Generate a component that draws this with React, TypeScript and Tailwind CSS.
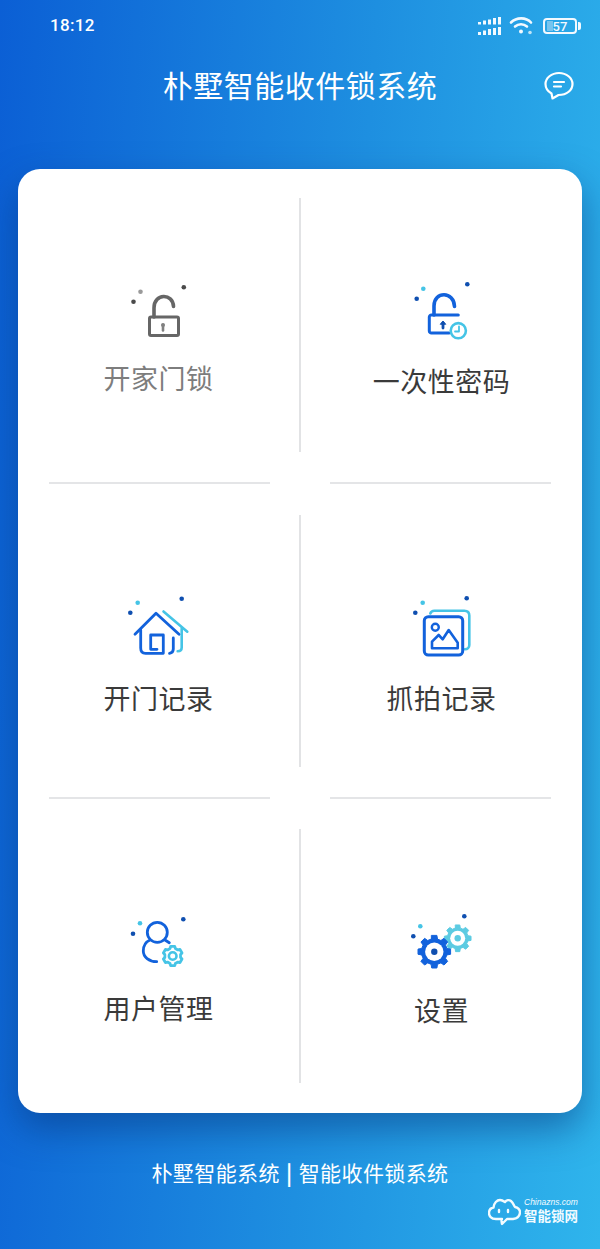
const CJK = "font-['Noto_Sans_CJK_SC','Noto_Sans',sans-serif]";
const BLUE = "#1262dc";
const DARK = "#0f4fb0";
const CYAN = "#45c4e6";

function gear(cx: number, cy: number, rOut: number, rIn: number, teeth: number) {
  const pts: string[] = [];
  const step = (Math.PI * 2) / teeth;
  for (let i = 0; i < teeth; i++) {
    const a = i * step - Math.PI / 2;
    const w = step * 0.2;
    const o = [a - w, a + w];
    const n = [a + step * 0.32, a + step * 0.68];
    o.forEach((t) => pts.push(`${(cx + rOut * Math.cos(t)).toFixed(2)},${(cy + rOut * Math.sin(t)).toFixed(2)}`));
    n.forEach((t) => pts.push(`${(cx + rIn * Math.cos(t)).toFixed(2)},${(cy + rIn * Math.sin(t)).toFixed(2)}`));
  }
  return pts.join(" ");
}

function Dots({ a, b, c, ca = DARK, cb = CYAN, cc = DARK }: { a: number[]; b: number[]; c: number[]; ca?: string; cb?: string; cc?: string }) {
  return (
    <>
      <circle cx={a[0]} cy={a[1]} r="2.3" fill={ca} />
      <circle cx={b[0]} cy={b[1]} r="2.3" fill={cb} />
      <circle cx={c[0]} cy={c[1]} r="2.3" fill={cc} />
    </>
  );
}

function Svg({ children }: { children: React.ReactNode }) {
  return (
    <svg width="80" height="70" viewBox="0 0 80 70" fill="none" strokeLinecap="round" strokeLinejoin="round" className="block shrink-0">
      {children}
    </svg>
  );
}

function LockGray() {
  return (
    <Svg>
      <Dots a={[14.5, 21.7]} b={[21.5, 11.7]} c={[64.8, 7.3]} ca="#4a4a4a" cb="#9a9a9a" cc="#4a4a4a" />
      <rect x="30.5" y="37" width="29" height="18.5" rx="1.5" stroke="#666" strokeWidth="3" />
      <path d="M35 37V28C35 13 54 13 54.5 26.5" stroke="#666" strokeWidth="3.6" />
      <circle cx="44" cy="45" r="2" fill="#808080" />
      <path d="M44 45V50.5" stroke="#808080" strokeWidth="2.6" />
    </Svg>
  );
}

function LockBlue() {
  return (
    <Svg>
      <Dots a={[14.7, 18.7]} b={[21.3, 8.7]} c={[65.3, 4.3]} />
      <path d="M47 53H29.5A2 2 0 0 1 27.3 51V37A2 2 0 0 1 29.5 35H56.3" stroke={BLUE} strokeWidth="3" />
      <path d="M32 35V26C32 11 52 11 52.5 26.5" stroke={BLUE} strokeWidth="3.6" />
      <path d="M41 43V48" stroke={DARK} strokeWidth="2.8" />
      <path d="M38.5 44L41 41L43.5 44Z" fill={DARK} stroke={DARK} strokeWidth="1" />
      <circle cx="56.3" cy="50.7" r="7.6" fill="#fff" stroke={CYAN} strokeWidth="2.6" />
      <path d="M57 46.5V51.5H53" stroke={CYAN} strokeWidth="1.8" />
    </Svg>
  );
}

function House() {
  return (
    <Svg>
      <Dots a={[11.3, 22.7]} b={[18.7, 12.7]} c={[62.7, 8.7]} />
      <path d="M44.5 21.5L68.3 41.7" stroke={CYAN} strokeWidth="2.6" />
      <path d="M62.7 38.5V57.5C62.7 60 61 61.3 58.7 61.3" stroke={CYAN} strokeWidth="2.6" />
      <path d="M16 44.3L37 23.3L60 44.3" stroke={BLUE} strokeWidth="2.8" />
      <path d="M21.7 40V58C21.7 61.5 23 63.3 26.5 63.3H44.3V45H31.7V59.3H38" stroke={BLUE} strokeWidth="2.8" />
      <path d="M54.3 48V59C54.3 61.5 53 63 50.5 63.3" stroke={BLUE} strokeWidth="2.8" />
    </Svg>
  );
}

function Photo() {
  return (
    <Svg>
      <Dots a={[13.3, 22.7]} b={[20.7, 12.7]} c={[64.7, 8.3]} />
      <path d="M28.3 23.5C29 21.5 30.5 20.7 32.3 20.7H62.3C65.5 20.7 67.3 22.5 67.3 25.5V55C67.3 57.5 65.5 59.3 63 59.3" stroke={CYAN} strokeWidth="2.6" />
      <rect x="22.3" y="26.7" width="38.4" height="38.3" rx="4" stroke={BLUE} strokeWidth="3" />
      <circle cx="33.3" cy="37.3" r="3.5" stroke={BLUE} strokeWidth="2.4" />
      <path d="M30 58.3V51.7L36.7 45L40.7 49.3L46.7 40L55.7 52.7V58.3Z" stroke={BLUE} strokeWidth="2.6" />
    </Svg>
  );
}

function User() {
  return (
    <Svg>
      <Dots a={[14, 28.7]} b={[21, 18.3]} c={[64.3, 14.3]} />
      <circle cx="38.3" cy="27.3" r="10" stroke={BLUE} strokeWidth="2.8" />
      <path d="M31 35C26.5 37 24.3 41.5 24.3 46C24.3 52 30 56.7 37.7 56.7" stroke={BLUE} strokeWidth="2.8" />
      <path d="M46 35L50.3 37.7" stroke={BLUE} strokeWidth="2.8" />
      <polygon points={gear(53.7, 51, 9.8, 8, 6)} stroke={CYAN} strokeWidth="2.8" fill="#fff" />
      <circle cx="53.7" cy="51" r="3.8" stroke={CYAN} strokeWidth="2.6" />
    </Svg>
  );
}

function Gears() {
  return (
    <Svg>
      <Dots a={[11.3, 31.3]} b={[18.3, 21.3]} c={[62.3, 11.3]} />
      <polygon points={gear(55.7, 33.3, 13.5, 10.5, 8)} fill="#5ccbe2" stroke="#5ccbe2" strokeWidth="1" />
      <circle cx="55.7" cy="33.3" r="7.5" fill="#fff" />
      <circle cx="55.7" cy="33.3" r="3.2" fill="#5ccbe2" />
      <polygon points={gear(32.3, 46.7, 16.5, 13, 8)} fill={BLUE} stroke={BLUE} strokeWidth="1" />
      <circle cx="32.3" cy="46.7" r="9.2" fill="#fff" />
      <circle cx="32.3" cy="46.7" r="3.2" fill={DARK} />
    </Svg>
  );
}

function Cell({ icon, label, top, gap, gray }: { icon: React.ReactNode; label: string; top: string; gap: string; gray?: boolean }) {
  return (
    <div className={`flex flex-1 flex-col items-center ${top}`}>
      {icon}
      <div className={`${gap} text-[27px] leading-[36px] tracking-[0.5px] whitespace-nowrap ${gray ? "text-[#7d7d7d]" : "text-[#3a3a3a]"}`}>{label}</div>
    </div>
  );
}

function VLine() {
  return <div className="w-[2px] shrink-0 bg-[#e2e3e5]" />;
}

function HRule() {
  return (
    <div className="flex justify-between px-[31px]">
      <div className="h-[2px] w-[221px] bg-[#e4e5e7]" />
      <div className="h-[2px] w-[221px] bg-[#e4e5e7]" />
    </div>
  );
}

function StatusIcons() {
  return (
    <div className="flex items-center">
      <svg width="23" height="19" viewBox="0 0 23 19" fill="#f2f9ff">
        <rect x="0" y="5" width="3" height="2.5" /><rect x="5" y="3.5" width="3" height="4" /><rect x="10" y="2.5" width="3" height="5" /><rect x="15" y="1" width="3" height="6.5" /><rect x="20" y="0" width="3" height="7.5" />
        <rect x="0" y="15" width="3" height="3" /><rect x="5" y="13.5" width="3" height="4.5" /><rect x="10" y="12" width="3" height="6" /><rect x="15" y="11" width="3" height="7" /><rect x="20" y="10" width="3" height="8" />
      </svg>
      <svg width="26" height="20" viewBox="0 0 26 20" fill="none" stroke="#f2f9ff" strokeWidth="2.6" strokeLinecap="round" className="ml-[8px]">
        <path d="M2 6.5C7.5 1 17 1 22 6.5" />
        <path d="M6 10.5C9.5 7.5 14.5 7.5 18 10.5" />
        <circle cx="12" cy="15.5" r="2" fill="#f2f9ff" stroke="none" />
        <circle cx="21" cy="16.5" r="1.8" fill="#bfe4f7" stroke="none" />
      </svg>
      <div className="relative ml-[8px] flex h-[16px] w-[34px] items-center justify-center rounded-[4px] border-2 border-[#f2f9ff]">
        <div className="absolute inset-y-[1px] left-[2px] w-[6px] bg-[#78c4ee]" />
        <span className="relative font-['Roboto',sans-serif] text-[13px] leading-none font-medium text-[#f2f9ff]">57</span>
        <div className="absolute top-[2px] right-[-6px] h-[8px] w-[3px] rounded-r-[2px] bg-[#f2f9ff]" />
      </div>
    </div>
  );
}

function Chat() {
  return (
    <svg width="32" height="30" viewBox="0 0 32 30" fill="none" stroke="#fff" strokeWidth="2.2" strokeLinecap="round" strokeLinejoin="round">
      <path d="M16 2C8.5 2 2.5 7 2.5 13C2.5 17.5 5 20.5 8.5 22.5L9.5 27.5L15.5 24C24 24 29.5 19 29.5 13C29.5 7 23.5 2 16 2Z" />
      <path d="M11 11H21M11 15.5H18" />
    </svg>
  );
}

function Cloud() {
  return (
    <svg width="33" height="28" viewBox="0 0 33 28" fill="none" stroke="#f2fbff" strokeWidth="2.4" strokeLinecap="round" strokeLinejoin="round">
      <path d="M14 21H8C3 21 1 18 1 15C1 12 3 10 5.5 9.5C6 5 9 2 12 2C14 2 15.5 3 17 4C18.5 2 21 1.5 23 3C25.5 5 26 8 27 9C30 9.5 32 12 32 14C32 18 29 20.5 25 21H19L14 26L13.5 23" />
      <path d="M11 12V14M20 12V14" />
    </svg>
  );
}

export default function App() {
  return (
    <div className={`${CJK} relative h-[1249px] w-[600px] overflow-hidden bg-[linear-gradient(94deg,#0b5fd5_0%,#1e8fe0_55%,#2fb5ec_100%)]`}>
      <div className="flex h-[52px] items-center justify-between pr-[23px] pl-[50px]">
        <span className="font-['Roboto',sans-serif] text-[17px] font-medium tracking-[0.3px] text-white">18:12</span>
        <StatusIcons />
      </div>
      <div className="relative flex h-[64px] items-center justify-center">
        <h1 className="text-[30px] leading-[40px] font-normal tracking-[0.5px] text-white">朴墅智能收件锁系统</h1>
        <div className="absolute top-[19px] right-[25px]">
          <Chat />
        </div>
      </div>
      <main className="mx-[18px] mt-[53px] h-[944px] rounded-[22px] bg-white pt-[29px] shadow-[0_16px_36px_rgba(5,50,120,0.5)]">
        <div className="flex h-[254px]">
          <Cell icon={<LockGray />} label="开家门锁" top="pt-[82px]" gap="mt-[10px]" gray />
          <VLine />
          <Cell icon={<LockBlue />} label="一次性密码" top="pt-[82px]" gap="mt-[13px]" />
        </div>
        <div className="h-[30px]" />
        <HRule />
        <div className="h-[31px]" />
        <div className="flex h-[252px]">
          <Cell icon={<House />} label="开门记录" top="pt-[75px]" gap="mt-[20px]" />
          <VLine />
          <Cell icon={<Photo />} label="抓拍记录" top="pt-[75px]" gap="mt-[20px]" />
        </div>
        <div className="h-[30px]" />
        <HRule />
        <div className="h-[30px]" />
        <div className="flex h-[254px]">
          <Cell icon={<User />} label="用户管理" top="pt-[76px]" gap="mt-[15px]" />
          <VLine />
          <Cell icon={<Gears />} label="设置" top="pt-[76px]" gap="mt-[17px]" />
        </div>
      </main>
      <footer className="mt-[44px] text-center text-[21px] leading-[30px] tracking-[0.4px] whitespace-nowrap text-white">朴墅智能系统 <span className="mx-[1px] font-bold">|</span> 智能收件锁系统</footer>
      <div className="absolute top-[1198px] left-[488px] flex items-start gap-[3px]">
        <Cloud />
        <div className="flex flex-col gap-[1px] text-[#f2fbff]">
          <span className="font-['Liberation_Sans',sans-serif] text-[8.5px] leading-[9px] italic">Chinazns.com</span>
          <span className="text-[13.5px] leading-[14px] font-bold">智能锁网</span>
        </div>
      </div>
    </div>
  );
}
